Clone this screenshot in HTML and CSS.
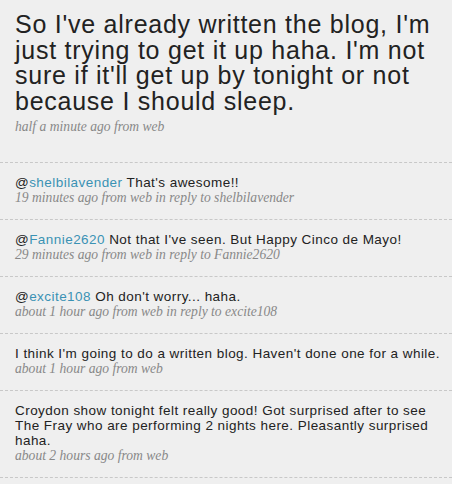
FILE: index.html
```html
<!DOCTYPE html>
<html>
<head>
<meta charset="utf-8">
<link rel="stylesheet" href="styles.css">
</head>
<body>
<div class="timeline">
  <div class="status main">
    <p class="big">So I've already written the blog, I'm just trying to get it up haha. I'm not sure if it'll get up by tonight or not because I should sleep.</p>
    <p class="meta">half a minute ago from web</p>
  </div>
  <div class="status">
    <p class="text"><span class="at">@<span class="user">shelbilavender</span></span> That's awesome!!</p>
    <p class="meta">19 minutes ago from web in reply to shelbilavender</p>
  </div>
  <div class="status">
    <p class="text"><span class="at">@<span class="user">Fannie2620</span></span> Not that I've seen. But Happy Cinco de Mayo!</p>
    <p class="meta">29 minutes ago from web in reply to Fannie2620</p>
  </div>
  <div class="status">
    <p class="text"><span class="at">@<span class="user">excite108</span></span> Oh don't worry... haha.</p>
    <p class="meta">about 1 hour ago from web in reply to excite108</p>
  </div>
  <div class="status">
    <p class="text">I think I'm going to do a written blog. Haven't done one for a while.</p>
    <p class="meta">about 1 hour ago from web</p>
  </div>
  <div class="status">
    <p class="text">Croydon show tonight felt really good! Got surprised after to see The Fray who are performing 2 nights here. Pleasantly surprised haha.</p>
    <p class="meta">about 2 hours ago from web</p>
  </div>
</div>
</body>
</html>
```
FILE: styles.css
```css
html, body {
  margin: 0;
  padding: 0;
  background: #efefef;
}
body {
  font-family: "Liberation Sans", Arial, sans-serif;
  color: #222;
  overflow: hidden;
}
.timeline {
  display: flex;
  flex-direction: column;
}
.status {
  padding: 12px 8px 13px 15px;
  border-bottom: 1px dashed #c8c8c8;
}
.status.main {
  padding-top: 12px;
  padding-bottom: 27px;
}
p {
  margin: 0;
}
.big {
  font-size: 25px;
  line-height: 25.7px;
  letter-spacing: 0.75px;
  color: #222;
}
.main .meta {
  margin-top: 4px;
}
.text {
  font-size: 13.5px;
  line-height: 15px;
  letter-spacing: 0.45px;
}
.at {
  color: #222;
}
.user {
  color: #3a92b4;
}
.meta {
  font-family: "Liberation Serif", "Times New Roman", serif;
  font-style: italic;
  font-size: 13.6px;
  line-height: 16px;
  color: #888;
}
```
